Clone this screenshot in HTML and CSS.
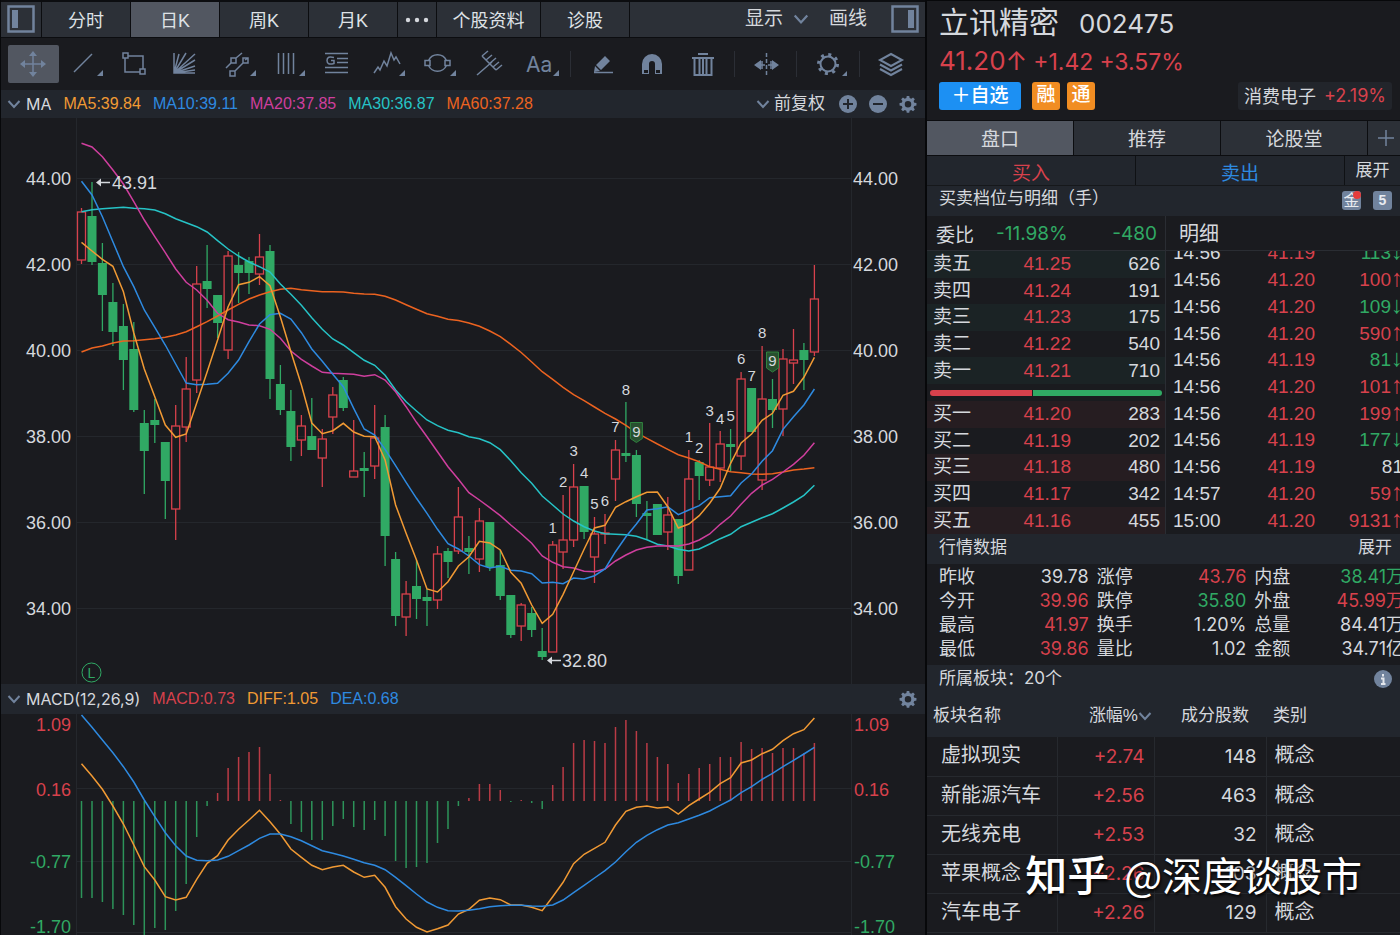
FILE: index.html
```html
<!DOCTYPE html>
<html lang="zh-CN">
<head>
<meta charset="utf-8">
<title>立讯精密 002475</title>
<link rel="stylesheet" href="styles.css">
</head>
<body>
<svg class="defs" aria-hidden="true">
  <symbol id="gear" viewBox="0 0 20 20">
    <path fill="currentColor" fill-rule="evenodd" d="M8.6 1h2.8l.4 2.4 1.8.8 2-1.4 2 2-1.4 2 .8 1.8 2.4.4v2.8l-2.4.4-.8 1.8 1.4 2-2 2-2-1.4-1.8.8-.4 2.4H8.6l-.4-2.4-1.8-.8-2 1.4-2-2 1.4-2-.8-1.8-2.4-.4V9l2.4-.4.8-1.8-1.4-2 2-2 2 1.4 1.8-.8zM10 6.6a3.6 3.6 0 1 0 0 7.2 3.6 3.6 0 0 0 0-7.2z"/>
  </symbol>
  <symbol id="chevron" viewBox="0 0 14 10"><path d="M1.5 2 7 8l5.5-6" fill="none" stroke="currentColor" stroke-width="2"/></symbol>
</svg>
<div class="app">
  <main class="left">
    <nav class="tabs">
      <button class="tab tab-icon" aria-label="左侧栏"><svg width="28" height="28" viewBox="0 0 28 28"><path d="M1.5 1.5h25v25h-25z" fill="none" stroke="#71839d" stroke-width="2.5"/><path d="M5 5h6v18H5z" fill="#71839d"/></svg></button>
      <button class="tab">分时</button>
      <button class="tab active">日K</button>
      <button class="tab">周K</button>
      <button class="tab">月K</button>
      <button class="tab tab-more" aria-label="更多"><svg width="24" height="6" viewBox="0 0 24 6" fill="#d5d8dd"><circle cx="3" cy="3" r="2.2"/><circle cx="12" cy="3" r="2.2"/><circle cx="21" cy="3" r="2.2"/></svg></button>
      <button class="tab tab-wide">个股资料</button>
      <button class="tab">诊股</button>
      <div class="tab-rest">
        <button class="plain">显示 <svg class="chev-lg"><use href="#chevron"/></svg></button>
        <button class="plain">画线</button>
        <button class="plain" aria-label="右侧栏"><svg width="28" height="28" viewBox="0 0 28 28"><path d="M1.5 1.5h25v25h-25z" fill="none" stroke="#71839d" stroke-width="2.5"/><path d="M17 5h6v18h-6z" fill="#71839d"/></svg></button>
      </div>
    </nav>
    <div class="toolbar">
      <button class="tool on" aria-label="移动"><svg viewBox="0 0 50 38"><path d="M13 19h24M25 7v24"/><path class="f" d="M12 19l5-4v8zM38 19l-5-4v8zM25 6l-4 5h8zM25 32l-4-5h8z"/></svg></button>
      <button class="tool" aria-label="直线"><svg viewBox="0 0 50 38"><path d="M15 27 33 9"/><path class="f" d="M44 25v6h-6z"/></svg></button>
      <button class="tool" aria-label="矩形"><svg viewBox="0 0 50 38"><path d="M19 11h15v13M31 27H16V13M14 8h5v5h-5zM31 24h5v5h-5z"/></svg></button>
      <button class="tool" aria-label="扇形线"><svg viewBox="0 0 50 38"><path d="M14 8v20h21M14 28 19 9M14 28 26 8M14 28 35 9M14 28 35 15M14 28 35 21M14 28 35 25"/></svg></button>
      <button class="tool" aria-label="平行线"><svg viewBox="0 0 50 38"><path d="M15 23l5-5M25 13l6-5M24 26l8-8M37 13l-3 2M20 13h5v5h-5zM32 13h5v5h-5zM19 26h5v5h-5z"/><path class="f" d="M45 25v6h-6z"/></svg></button>
      <button class="tool" aria-label="周期线"><svg viewBox="0 0 50 38"><path d="M17.5 8v21M22.5 8v21M27.5 8v21M32.5 8v21"/><path class="f" d="M44 25v6h-6z"/></svg></button>
      <button class="tool" aria-label="黄金分割"><svg viewBox="0 0 50 38"><path d="M13 8.5h23M25 13.5h11M25 17.5h11M13 22.5h23M13 27.5h23M22 12.5q-7-2-7 3t7 3v-3h-3"/></svg></button>
      <button class="tool" aria-label="波浪线"><svg viewBox="0 0 50 38"><path d="M12 28l4-6 2 3 4-9 3 5 4-13 3 7 2-3 4 7"/><path class="f" d="M43 25v6h-6z"/></svg></button>
      <button class="tool" aria-label="圆形"><svg viewBox="0 0 50 38"><path d="M15.5 15.5a10 10 0 0 1 18 0M15.5 20.5a10 10 0 0 0 18 0M12 15.5h5v5h-5zM32 15.5h5v5h-5z"/><path class="f" d="M43 25v6h-6z"/></svg></button>
      <button class="tool" aria-label="叉线"><svg viewBox="0 0 50 38"><path d="M13 30 28 17M18 11l14 14M18 11l6-5M22 15l6-5M25 19l7-6M29 22l6-5M32 25l6-5"/></svg></button>
      <button class="tool tool-text" aria-label="文字">Aa<svg class="corner" viewBox="0 0 6 6"><path class="f" d="M6 0v6H0z"/></svg></button>
      <i class="sep"></i>
      <button class="tool" aria-label="橡皮"><svg viewBox="0 0 50 38"><path class="f" d="M28 11l5 5-9 9-5-5zM18 21l5 5-6 1z"/><path d="M17 27.5h19"/></svg></button>
      <button class="tool" aria-label="磁铁"><svg viewBox="0 0 50 38"><path class="f" d="M15 29V19a10 10 0 0 1 20 0v10h-7V19a3 3 0 0 0-6 0v10z"/><path d="M17 26.5h4M29 26.5h4" class="cut"/></svg></button>
      <button class="tool" aria-label="删除"><svg viewBox="0 0 50 38"><path d="M14 13h22M16.500 13v17h17V13M21.500 14v15M25 14v15M28.500 14v15M20 9h10" stroke-width="2"/></svg></button>
      <i class="sep"></i>
      <button class="tool" aria-label="展开间距"><svg viewBox="0 0 50 38"><path d="M25.5 8v23" stroke-dasharray="4 2"/><path d="M15 20h9M27 20h9M21 16v8M30 16v8"/><path class="f" d="M13 20l7-5v10zM38 20l-7-5v10z"/></svg></button>
      <i class="sep"></i>
      <button class="tool" aria-label="设置"><svg viewBox="0 0 50 38"><circle cx="25" cy="19" r="7.5" stroke-width="2"/><circle cx="25" cy="19" r="9.5" stroke-width="3" stroke-dasharray="3 4.46"/><path class="f" d="M44 26v5h-5z"/></svg></button>
      <i class="sep"></i>
      <button class="tool" aria-label="图层"><svg viewBox="0 0 50 38"><path d="M25 9l11 6-11 6-11-6zM14 19.5l11 6 11-6M14 24l11 6 11-6" stroke-width="2"/></svg></button>
    </div>
    <div class="bar">
      <svg class="chev"><use href="#chevron"/></svg><span class="bar-name">MA</span>
      <div class="legend"><span class="c5">MA5:39.84</span><span class="c10">MA10:39.11</span><span class="c20">MA20:37.85</span><span class="c30">MA30:36.87</span><span class="c60">MA60:37.28</span></div>
      <div class="bar-end">
        <button class="plain small"><svg class="chev"><use href="#chevron"/></svg>前复权</button>
        <button class="round" aria-label="放大"><svg viewBox="0 0 18 18"><circle cx="9" cy="9" r="9"/><path d="M4 9h10M9 4v10"/></svg></button>
        <button class="round" aria-label="缩小"><svg viewBox="0 0 18 18"><circle cx="9" cy="9" r="9"/><path d="M4 9h10"/></svg></button>
        <button class="round" aria-label="指标设置"><svg viewBox="0 0 20 20"><use href="#gear"/></svg></button>
      </div>
    </div>
    <svg id="price" class="chart" viewBox="1 118 924 566" role="img" aria-label="日K线图"></svg>
    <div class="bar">
      <svg class="chev"><use href="#chevron"/></svg><span class="bar-name">MACD(12,26,9)</span>
      <div class="legend"><span class="up">MACD:0.73</span><span class="c5">DIFF:1.05</span><span class="dea">DEA:0.68</span></div>
      <div class="bar-end"><button class="round" aria-label="MACD设置"><svg viewBox="0 0 20 20"><use href="#gear"/></svg></button></div>
    </div>
    <svg id="macd" class="chart" viewBox="1 714 924 221" role="img" aria-label="MACD"></svg>
  </main>

  <aside class="right">
    <header class="head">
      <h1 class="name">立讯精密 <span class="code">002475</span></h1>
      <p class="quote up"><b class="last">41.20↑</b><span>+1.42</span><span>+3.57%</span></p>
      <div class="tags">
        <button class="add">＋自选</button>
        <span class="tag">融</span><span class="tag">通</span>
        <a class="sector" href="#">消费电子 <span class="up sf">+2.19%</span></a>
      </div>
    </header>
    <nav class="side-tabs">
      <button class="stab active">盘口</button><button class="stab">推荐</button><button class="stab">论股堂</button><button class="stab-add" aria-label="添加"><svg width="16" height="16" viewBox="0 0 16 16"><path d="M0 8h16M8 0v16" stroke="#71839d" stroke-width="1.5"/></svg></button>
    </nav>
    <div class="trade">
      <button class="buy">买入</button><button class="sell">卖出</button><button class="more">展开</button>
    </div>
    <div class="title title-book">买卖档位与明细（手）
      <span class="badges"><span class="badge gold">金</span><span class="badge">5</span></span>
    </div>
    <section class="book">
      <div class="levels">
        <div class="ratio"><span class="cn">委比</span><span>-11.98%</span><span>-480</span></div>
        <table class="depth asks">
          <tr><th>卖五</th><td class="up">41.25</td><td>626</td></tr>
          <tr><th>卖四</th><td class="up">41.24</td><td>191</td></tr>
          <tr><th>卖三</th><td class="up">41.23</td><td>175</td></tr>
          <tr><th>卖二</th><td class="up">41.22</td><td>540</td></tr>
          <tr><th>卖一</th><td class="up">41.21</td><td>710</td></tr>
        </table>
        <div class="balance"><i class="b-buy" style="width:44%"></i><i class="b-sell"></i></div>
        <table class="depth bids">
          <tr><th>买一</th><td class="up">41.20</td><td>283</td></tr>
          <tr><th>买二</th><td class="up">41.19</td><td>202</td></tr>
          <tr><th>买三</th><td class="up">41.18</td><td>480</td></tr>
          <tr><th>买四</th><td class="up">41.17</td><td>342</td></tr>
          <tr><th>买五</th><td class="up">41.16</td><td>455</td></tr>
        </table>
      </div>
      <div class="ticks">
        <div class="ticks-head">明细</div>
        <div class="ticks-view">
          <table class="tick-table">
            <tr><td>14:56</td><td>41.19</td><td class="down">113<i>↓</i></td></tr>
            <tr><td>14:56</td><td>41.20</td><td class="up">100<i>↑</i></td></tr>
            <tr><td>14:56</td><td>41.20</td><td class="down">109<i>↓</i></td></tr>
            <tr><td>14:56</td><td>41.20</td><td class="up">590<i>↑</i></td></tr>
            <tr><td>14:56</td><td>41.19</td><td class="down">81<i>↓</i></td></tr>
            <tr><td>14:56</td><td>41.20</td><td class="up">101<i>↑</i></td></tr>
            <tr><td>14:56</td><td>41.20</td><td class="up">199<i>↑</i></td></tr>
            <tr><td>14:56</td><td>41.19</td><td class="down">177<i>↓</i></td></tr>
            <tr><td>14:56</td><td>41.19</td><td>81</td></tr>
            <tr><td>14:57</td><td>41.20</td><td class="up">59<i>↑</i></td></tr>
            <tr><td>15:00</td><td>41.20</td><td class="up">9131<i>↑</i></td></tr>
          </table>
        </div>
      </div>
    </section>
    <div class="title title-data">行情数据 <button class="plain small">展开</button></div>
    <dl class="stats">
      <div><dt>昨收</dt><dd>39.78</dd></div><div><dt>涨停</dt><dd class="up">43.76</dd></div><div><dt>内盘</dt><dd class="down">38.41万</dd></div>
      <div><dt>今开</dt><dd class="up">39.96</dd></div><div><dt>跌停</dt><dd class="down">35.80</dd></div><div><dt>外盘</dt><dd class="up">45.99万</dd></div>
      <div><dt>最高</dt><dd class="up">41.97</dd></div><div><dt>换手</dt><dd>1.20%</dd></div><div><dt>总量</dt><dd>84.41万</dd></div>
      <div><dt>最低</dt><dd class="up">39.86</dd></div><div><dt>量比</dt><dd>1.02</dd></div><div><dt>金额</dt><dd>34.71亿</dd></div>
    </dl>
    <div class="title title-boards"><span>所属板块：<span class="sf">20</span>个</span>
      <button class="round" aria-label="说明"><svg viewBox="0 0 18 18"><circle cx="9" cy="9" r="9"/><path class="i" d="M9 4v2.5M7 8.5h2.5V14M7 14h4.5"/></svg></button></div>
    <table class="boards">
      <thead><tr><th>板块名称</th><th>涨幅%<svg class="chev"><use href="#chevron"/></svg></th><th>成分股数</th><th>类别</th></tr></thead>
      <tbody>
        <tr><td>虚拟现实</td><td>+2.74</td><td>148</td><td>概念</td></tr>
        <tr><td>新能源汽车</td><td>+2.56</td><td>463</td><td>概念</td></tr>
        <tr><td>无线充电</td><td>+2.53</td><td>32</td><td>概念</td></tr>
        <tr><td>苹果概念</td><td>+2.26</td><td>103</td><td>概念</td></tr>
        <tr><td>汽车电子</td><td>+2.26</td><td>129</td><td>概念</td></tr>
      </tbody>
    </table>
    <div class="watermark"><b>知乎</b> @深度谈股市</div>
  </aside>
</div>
<script src="chart.js"></script>
</body>
</html>
```
FILE: styles.css
```css
* { box-sizing: border-box; }
body {
  margin: 0;
  background: #07080a;
  color: #d5d8dd;
  font-family: "Liberation Sans", "Noto Sans CJK SC", sans-serif;
  font-size: 18px;
  overflow-x: hidden;
}
button { font: inherit; color: inherit; border: 0; padding: 0; background: none; cursor: pointer; }
h1, p, dl, dd { margin: 0; font-weight: 400; }
a { color: inherit; text-decoration: none; }
i { font-style: normal; }
.defs { display: none; }
.up { color: #d7414c; }
.down { color: #30a964; }
.sf { font-family: Inter, "Noto Sans CJK SC", sans-serif; }

.app { display: grid; grid-template-columns: minmax(0, 925fr) minmax(0, 473fr); column-gap: 2px; min-height: 100vh; }
.left, .right { background: #1a1b1f; min-width: 0; }
.left { margin-left: 1px; }

.tabs { display: flex; gap: 1px; height: 38px; padding: 2px 0 1px; background: #0c0d10; }
.tab { width: 88px; flex: none; background: #2c3037; color: #dfe2e6; display: flex; align-items: center; justify-content: center; padding-bottom: 2px; word-spacing: normal; }
.tab.active, .stab.active { background: #525761; }
.tab-icon { width: 40px; }
.tab-more { width: 38px; padding-bottom: 0; }
.tab-wide { width: 103px; }
.tab-rest { flex: 1; background: #2c3037; display: flex; align-items: center; justify-content: flex-end; gap: 20px; padding: 0 6px 2px 0; }
.tab-rest .plain:last-child { margin-left: 4px; }
.plain { display: flex; align-items: center; gap: 10px; font-size: 19px; line-height: 24px; }
.plain.small { font-size: 17px; gap: 4px; }
.chev-lg { width: 16px; height: 12px; color: #71839d; }
.chev { width: 14px; height: 10px; color: #71839d; flex: none; }

.toolbar { display: flex; align-items: center; height: 52px; padding: 0 9px 0 7px; }
.tool { flex: 1; height: 38px; min-width: 0; border-radius: 2px; color: #71839d; display: flex; align-items: center; justify-content: center; }
.tool > svg:not(.corner) { width: 50px; height: 38px; flex: none; fill: none; stroke: currentColor; stroke-width: 1.5; }
.tool .f { fill: currentColor; stroke: none; }
.tool .cut { stroke: #1a1b1f; stroke-width: 3; }
.tool.on { background: #525761; }
.tool-text { font: 21px Inter, sans-serif; position: relative; }
.corner { position: absolute; right: 6px; bottom: 7px; width: 6px; height: 6px; }
.sep { width: 12px; flex: none; height: 26px; background: linear-gradient(#2b2e35, #2b2e35) center / 1px 100% no-repeat; }

.bar { display: flex; align-items: center; height: 28px; padding: 0 8px 0 6px; background: #22262d; font-size: 16px; }
.chart + .bar { height: 30px; }
.bar-name { margin-left: 5px; font: 16px Inter, sans-serif; }
.legend { display: flex; gap: 12px; margin-left: 12px; line-height: 20px; }
.bar-end { display: flex; gap: 12px; margin-left: auto; align-items: center; }
.bar-end .small { margin-right: 2px; }
.round { width: 18px; height: 18px; color: #71839d; }
.round svg { display: block; width: 18px; height: 18px; fill: currentColor; }
.round path { stroke: #22262d; stroke-width: 2; }
.round .i { stroke: #e4e7ec; fill: none; }
.c5 { color: #f19a34; }
.c10, .dea { color: #2e8ae0; }
.c20 { color: #cf3f9e; }
.c30 { color: #26c3c6; }
.c60 { color: #ec6320; }

.chart { display: block; width: 100%; height: auto; }
.chart text { font-family: "Liberation Sans", sans-serif; font-size: 18px; fill: #d5d8dd; }
.chart .count { font-size: 15px; text-anchor: middle; }
.chart .end { text-anchor: end; }
.chart .t-up { fill: #d7414c; }
.chart .t-down, .chart .t-mark { fill: #30a964; }
.chart .t-mark { font-size: 14px; text-anchor: middle; }
.grid { stroke: #24272c; }
.line { fill: none; stroke-width: 1.5; }

.right { position: relative; overflow: hidden; }
.head { padding: 3px 8px 0 12px; height: 120px; border-top: 1px solid #07080a; }
.name { display: flex; align-items: baseline; gap: 20px; font-size: 30px; line-height: 38px; }
.code { font: 26px Inter, sans-serif; }
.quote { display: flex; align-items: baseline; gap: 6px; font: 23px/38px Inter, sans-serif; }
.last { font-weight: 400; font-size: 26px; }
.tags { display: flex; align-items: center; margin-top: 1px; }
.add { width: 82px; height: 28px; border-radius: 3px; background: #1c90f3; color: #fff; font-size: 19px; font-weight: 500; line-height: 28px; margin-right: 11px; }
.tag { width: 28px; height: 28px; margin-right: 7px; border-radius: 3px; background: #f18d22; color: #fff; font-size: 19px; font-weight: 500; line-height: 26px; text-align: center; }
.sector { margin-left: auto; display: flex; align-items: center; gap: 8px; height: 28px; padding: 0 6px 2px; background: #22252b; font-size: 18px; border-radius: 3px; }
.side-tabs { display: flex; gap: 1px; height: 36px; padding: 1px 0; background: #0c0d10; }
.stab { flex: 1; background: #2c3037; font-size: 19px; padding-bottom: 2px; }
.stab-add { width: 32px; flex: none; background: #2c3037; display: flex; align-items: center; justify-content: flex-end; padding-right: 6px; }
.trade { display: flex; gap: 1px; height: 29px; background: #0f1114; }
.trade button { flex: 208; background: #22262d; font-size: 19px; line-height: 28px; padding-top: 4px; }
.trade .buy { color: #d7414c; }
.trade .sell { color: #2e8ae0; }
.trade .more { flex: 55; font-size: 17px; padding-top: 1px; }
.title { display: flex; align-items: center; justify-content: space-between; height: 30px; padding: 0 8px 2px 12px; background: #22262d; font-size: 17px; line-height: 24px; }
.title-book { height: 31px; padding-bottom: 4px; border-top: 1px solid #16181b; }
.badges { display: flex; gap: 12px; padding-top: 3px; }
.badge { position: relative; width: 19px; height: 19px; border-radius: 3px; background: #71839d; color: #e8ebf0; font: 700 14px/19px "Liberation Sans", "Noto Sans CJK SC", sans-serif; text-align: center; }
.gold { font-size: 16px; font-weight: 400; line-height: 20px; }
.gold::after { content: ""; position: absolute; right: 0; top: 0; width: 8px; height: 8px; border-radius: 4px; background: #e43b3b; }

.book { display: grid; grid-template-columns: 239fr 234fr; }
.levels { border-right: 1px solid #2a2d33; }
.ratio, .ticks-head { height: 35px; align-items: center; border-bottom: 1px solid #2a2d33; }
.ratio { display: grid; grid-template-columns: 60px 1fr 1fr; padding: 0 8px 0 9px; color: #30a964; font: 19px Inter, sans-serif; }
.ratio span:last-child { text-align: right; }
.ratio .cn { color: #d5d8dd; font: 19px "Noto Sans CJK SC", sans-serif; }
.ticks-head { display: flex; font-size: 20px; padding: 0 0 1px 13px; }
table { border-collapse: collapse; border-spacing: 0; }
.depth { width: 100%; height: 133px; font-size: 19px; table-layout: fixed; line-height: 22px; }
.depth th, .depth td { padding: 0; font-weight: 400; text-align: right; }
.depth th { width: 70px; padding-left: 6px; text-align: left; }
.depth td:nth-child(2) { width: 74px; }
.depth td:last-child { padding-right: 5px; }
.asks tr:nth-child(odd) { background: #1b2325; }
.bids tr:nth-child(odd) { background: #261d21; }
.balance { display: flex; gap: 1px; height: 6px; margin: 6px 3px 5px; border-radius: 3px; overflow: hidden; }
.b-buy { background: #d7414c; }
.b-sell { flex: 1; background: #30a964; }
.ticks { min-width: 0; overflow: hidden; }
.ticks-view { height: 283px; overflow: hidden; display: flex; align-items: flex-end; margin-right: -3px; }
.tick-table { width: 100%; height: 294px; font-size: 19px; line-height: 22px; table-layout: fixed; flex: none; }
.tick-table td { padding: 0; white-space: nowrap; }
.tick-table td:first-child { padding-left: 7px; width: 62px; }
.tick-table td:nth-child(2) { width: 87px; text-align: right; color: #d7414c; }
.tick-table td:last-child { text-align: right; }
.tick-table i { font-size: 24px; line-height: 0; }

.stats { display: grid; grid-template-columns: repeat(3, 1fr); column-gap: 8px; padding: 1px 0 4px 12px; height: 101px; margin-right: -4px; }
.stats div { display: flex; justify-content: space-between; align-items: center; height: 24px; line-height: 24px; }
.stats dd { font: 18px/24px Inter, "Noto Sans CJK SC", sans-serif; }
.title-boards { height: 29px; }
.boards { width: 100%; table-layout: fixed; font-size: 20px; line-height: 26px; }
.boards th { height: 43px; padding: 0; background: #22262d; font-size: 17px; font-weight: 400; text-align: right; }
.boards th:nth-child(1) { width: 130px; padding-left: 6px; text-align: left; }
.boards th:nth-child(2) { width: 97px; padding-right: 2px; }
.boards th:nth-child(3) { width: 112px; padding-right: 17px; }
.boards th:nth-child(4) { text-align: left; padding-left: 7px; }
.boards td { height: 39px; padding: 0 9px 2px 14px; border: solid #26292e; border-width: 0 1px 1px 0; }
.boards td:nth-child(2), .boards td:nth-child(3) { font: 19px Inter, sans-serif; text-align: right; padding: 0 9px 0 0; }
.boards td:nth-child(2) { color: #d7414c; }
.boards td:last-child { padding-left: 8px; border-right: 0; }
.watermark { position: absolute; right: 38px; bottom: 32px; color: #fff; font: 40px/58px "Noto Sans CJK SC", sans-serif; white-space: nowrap; text-shadow: 1px 2px 3px #000; }
.watermark b { font-weight: 500; font-size: 42px; margin-right: 6px; }
```
FILE: chart.js
```js
const X0 = 81.5, STEP = 10.47;
const x = i => +(X0 + STEP * i).toFixed(1);
const C = { up: '#d7414c', down: '#30a964', ma5: '#f19a34', ma10: '#2e8ae0', ma20: '#cf3f9e', ma30: '#26c3c6', ma60: '#ec6320' };

// direction, body top, body bottom, wick top, wick bottom
const candles = `R 212 260 208 264|G 216 262 182 265|G 263 295 243 331|G 302 332 283 346|G 326 360 304 390|G 349 410 322 412|G 423 451 410 494|G 420 425 399 443|G 442 481 442 519|R 426 509 405 540|R 389 427 357 442|R 284 380 266 393|G 281 289 245 308|G 295 323 295 338|R 256 350 251 359|G 265 273 252 303|G 261 273 257 294|R 257 274 234 285|G 251 379 245 399|G 384 410 365 415|G 411 447 390 461|R 426 440 415 456|G 436 450 398 450|R 439 458 429 487|R 395 417 387 434|G 380 408 377 411|R 471 477 420 477|G 468 471 452 497|R 438 466 405 479|G 427 536 415 566|G 559 616 552 626|R 594 617 581 636|G 586 599 560 619|G 597 601 589 626|R 554 600 546 609|G 551 562 548 578|R 517 551 487 554|G 548 552 536 574|R 521 559 508 572|G 522 567 522 571|G 565 596 550 600|G 595 635 595 638|R 605 626 603 641|G 613 630 607 637|G 651 657 628 660|R 545 652 541 652|R 540 552 495 569|R 487 540 464 547|G 486 532 486 539|R 534 557 517 583|R 533 534 514 544|R 450 479 440 501|G 453 456 402 462|G 455 504 450 517|G 513 516 501 539|G 504 535 504 535|R 515 532 497 550|G 519 576 519 584|R 479 570 450 570|G 462 476 460 500|R 467 480 423 486|R 444 468 431 482|G 444 447 429 472|R 379 456 372 470|G 388 432 388 432|R 399 480 346 490|G 399 410 379 428|R 359 409 349 436|R 360 363 329 384|G 350 360 343 390|R 299 352 265 356`
  .split('|').map(s => s.split(' '));

const ma = {
  ma60: [352,348,346,343,341,340.7,339.7,338.7,337.3,335,331.7,326.7,321.7,316,310,304.3,299,295,291.7,289.3,288.3,289.7,290.7,291.7,291.7,292,293.3,294,294.3,296.3,300,304.7,309.3,313.7,316.3,319.3,320.5,323,326.3,331,336.7,344.3,352.5,362,371.7,379.3,387.3,394.7,400.7,407,413.3,419,425.3,432.7,438.3,444,449.3,454.7,458,461.7,466.7,469.3,471.7,472.7,474,474.3,473.7,472,470,469,467.7],
  ma30: [211.7,209.7,208.7,208,207.3,208.3,208.7,210,213.7,218.7,222.7,226.7,232,240.7,249,256,262,266.7,272,284,294.3,305.3,317.7,329.3,339,345,352.7,360.3,365.3,375.3,390,401.7,411,420,425.7,430.3,432.7,436.7,438.7,442.7,449.7,460.7,472.7,483.3,496,505,514,521,526.7,531,533.7,534.3,534.7,536.3,539.7,544.3,546,549.3,551,549,544,538.7,534.3,526.7,522.3,517.7,513.7,508,502,495.3,485.3],
  ma20: [143.3,147,156.7,170,184,201.7,220,236.7,252.7,269,282.3,290,300.3,313.3,319.7,322,325,325.7,329.3,338.3,351,359.3,366,372.3,373.3,373.7,374.3,376.3,374.7,380,391.7,406.7,422.3,436.7,451.7,466.7,479.3,492.7,500,507.7,515.7,525,533.7,543.3,556,562.3,566.7,568,571.3,571.7,569,561,555,550,547.3,546,545.7,546,544,540,534,524.3,516,504.3,493.3,485,479.3,472,464.3,455.3,442.7],
  ma10: [181.3,195,216.7,241.7,266.7,286.7,310,327.3,345,364,383,384.7,384.3,383.3,373.3,360,341.7,324,314.7,313.3,319,332.7,349,361.3,374.3,386.7,408.3,429,435,449.3,465.7,482.3,498.3,513.3,529.3,543.7,549,556,564.7,568,566.3,570.3,571,573.7,583,582.3,583.7,578,579,575.7,569,551.7,536.7,524,510,508.7,506.7,514.7,510,505.7,497.7,496.7,495.7,483,474,461.3,450.7,429.3,416.7,405,389],
  ma5: [242.3,251,259.3,266.3,291.7,333,369,396.7,425,437.3,434,403,372,340,306.7,284.7,282.3,276.7,285.7,317,351.7,385,423,433.7,430.7,423.3,432,436.3,436.7,460,505,533.3,560,589,592,581.7,566,556.7,541.3,543,550,572.3,583.3,605,623.3,614.3,594.3,571.7,549.3,528,525.3,507.3,501.7,496.7,492.3,492,506.7,528,524,515.7,503.3,488.3,463.3,443,434,420.3,413.3,395.3,391.3,377.3,357.3]
};

const svgLine = (a, c) => `<polyline class="line" stroke="${c}" points="${a.map((v, i) => x(i) + ',' + v).join(' ')}"/>`;
const frame = (top, bottom, ys) =>
  `<path class="grid" d="M76.5 ${top}V${bottom}M851.5 ${top}V${bottom}${ys.map(y => `M77 ${y}H851`).join('')}"/>`;

function drawPrice() {
  const ys = [178.5, 264.5, 350.5, 436.5, 522.5, 608.5];
  let s = frame(118, 684, ys);
  ys.forEach((y, k) => {
    const t = (44 - 2 * k).toFixed(2);
    s += `<text class="end" x="71" y="${y + 6}">${t}</text><text x="853" y="${y + 6}">${t}</text>`;
  });
  candles.forEach(([d, t, b, h, l], i) => {
    const c = d === 'R' ? C.up : C.down, cx = x(i);
    s += `<path stroke="${c}" stroke-width="1.3" d="M${cx} ${h}V${t}M${cx} ${b}V${l}"/>`;
    s += d === 'R'
      ? `<rect x="${cx - 4}" y="${t}" width="8" height="${b - t}" fill="none" stroke="${c}" stroke-width="1.3"/>`
      : `<rect x="${cx - 4.5}" y="${t}" width="9" height="${b - t}" fill="${c}"/>`;
  });
  for (const k in ma) s += svgLine(ma[k], C[k]);
  // setup counts: candle index, centre y, label
  const counts = [[45,528,1],[46,482,2],[47,451,3],[48,473,4],[49,504,5],[50,501,6],[51,427,7],[52,389.5,8],[53,431.5,9],[58,437,1],[59,448,2],[60,411,3],[61,418.5,4],[62,416,5],[63,359,6],[64,376,7],[65,333,8],[66,361,9]];
  counts.forEach(([i, y, n]) => {
    if (n === 9) s += `<path d="M${x(i) - 6} ${y - 9}h12v16l-6 4-6-4z" fill="#28502f" stroke="#30843f"/>`;
    s += `<text class="count" x="${x(i)}" y="${y + 5}">${n}</text>`;
  });
  const arrow = (ax, y) => `<path d="M${ax + 3} ${y}h11" stroke="#d5d8dd" stroke-width="1.5"/><path d="M${ax} ${y}l5-4v8z" fill="#d5d8dd"/>`;
  s += arrow(96, 182.5) + '<text x="112" y="189">43.91</text>' + arrow(547, 660.5) + '<text x="562" y="667">32.80</text>';
  s += `<circle cx="91.5" cy="672.5" r="9.5" fill="none" stroke="${C.down}"/><text class="t-mark" x="91.5" y="677.5">L</text>`;
  document.getElementById('price').innerHTML = s;
}

const hist = [898,898,902,909,915,925,937,928,930,911,884,837,806,793,768,757,752,747,774,800,824,832,840,840,826,819,827,830,820,836,861,868,867,863,843,829,806,798,784,784,790,802,800,803,809,785,767,743,740,741,743,727,720,731,743,757,764,783,774,768,764,757,757,742,749,748,753,748,748,753,743];
const diff = [763.7,776,789.3,806,824,845,866.7,880,896.7,900,897.3,879.3,863.3,855.7,840,829.3,820,810.3,821.7,834.3,849,857.3,865.3,869.7,867,865.3,872,877.3,875.3,887.3,906.7,919,927.3,932,928.7,925,914,909.3,900.3,898,899.7,905,905,907.3,910.7,896.7,882.3,863.7,854.3,848.3,842.3,825,811.3,807.3,806,808,807,814,805.7,799,792.3,783.7,777.7,763,760,753.7,749.3,740.7,733.7,729.7,718];
const dea = [715,727.3,740,752.7,766.7,782,800,816.7,832.7,845.7,856,860.3,860.7,860,856.3,850.7,845,838.3,834,834,836.7,840.7,845.7,850.7,853.3,856,859.3,862.7,865.3,869.7,877.3,885.7,894,902,907.3,910.7,911,910.3,908.7,906.7,905.7,905.3,905.3,906,906.3,905,900,892.7,885.3,878,870.7,862,851.7,842.3,835.3,829.7,825,822.7,819,815.3,811,805.3,800,792.7,786.7,779.3,773.3,766.7,760.3,754,747.3];

function drawMacd() {
  let s = frame(714, 935, [788.5, 861.5, 932.5]);
  [['1.09', 724.5, 'up'], ['0.16', 789, 'up'], ['-0.77', 861.5, 'down'], ['-1.70', 926.5, 'down']].forEach(([t, y, c]) => {
    s += `<text class="end t-${c}" x="71" y="${y + 6.5}">${t}</text><text class="t-${c}" x="854" y="${y + 6.5}">${t}</text>`;
  });
  hist.forEach((v, i) => { s += `<path stroke="${v > 801 ? C.down : C.up}" stroke-opacity=".85" stroke-width="1.5" d="M${x(i)} 801V${v}"/>`; });
  s += svgLine(diff, C.ma5) + svgLine(dea, C.ma10);
  document.getElementById('macd').innerHTML = s;
}

drawPrice();
drawMacd();
```
